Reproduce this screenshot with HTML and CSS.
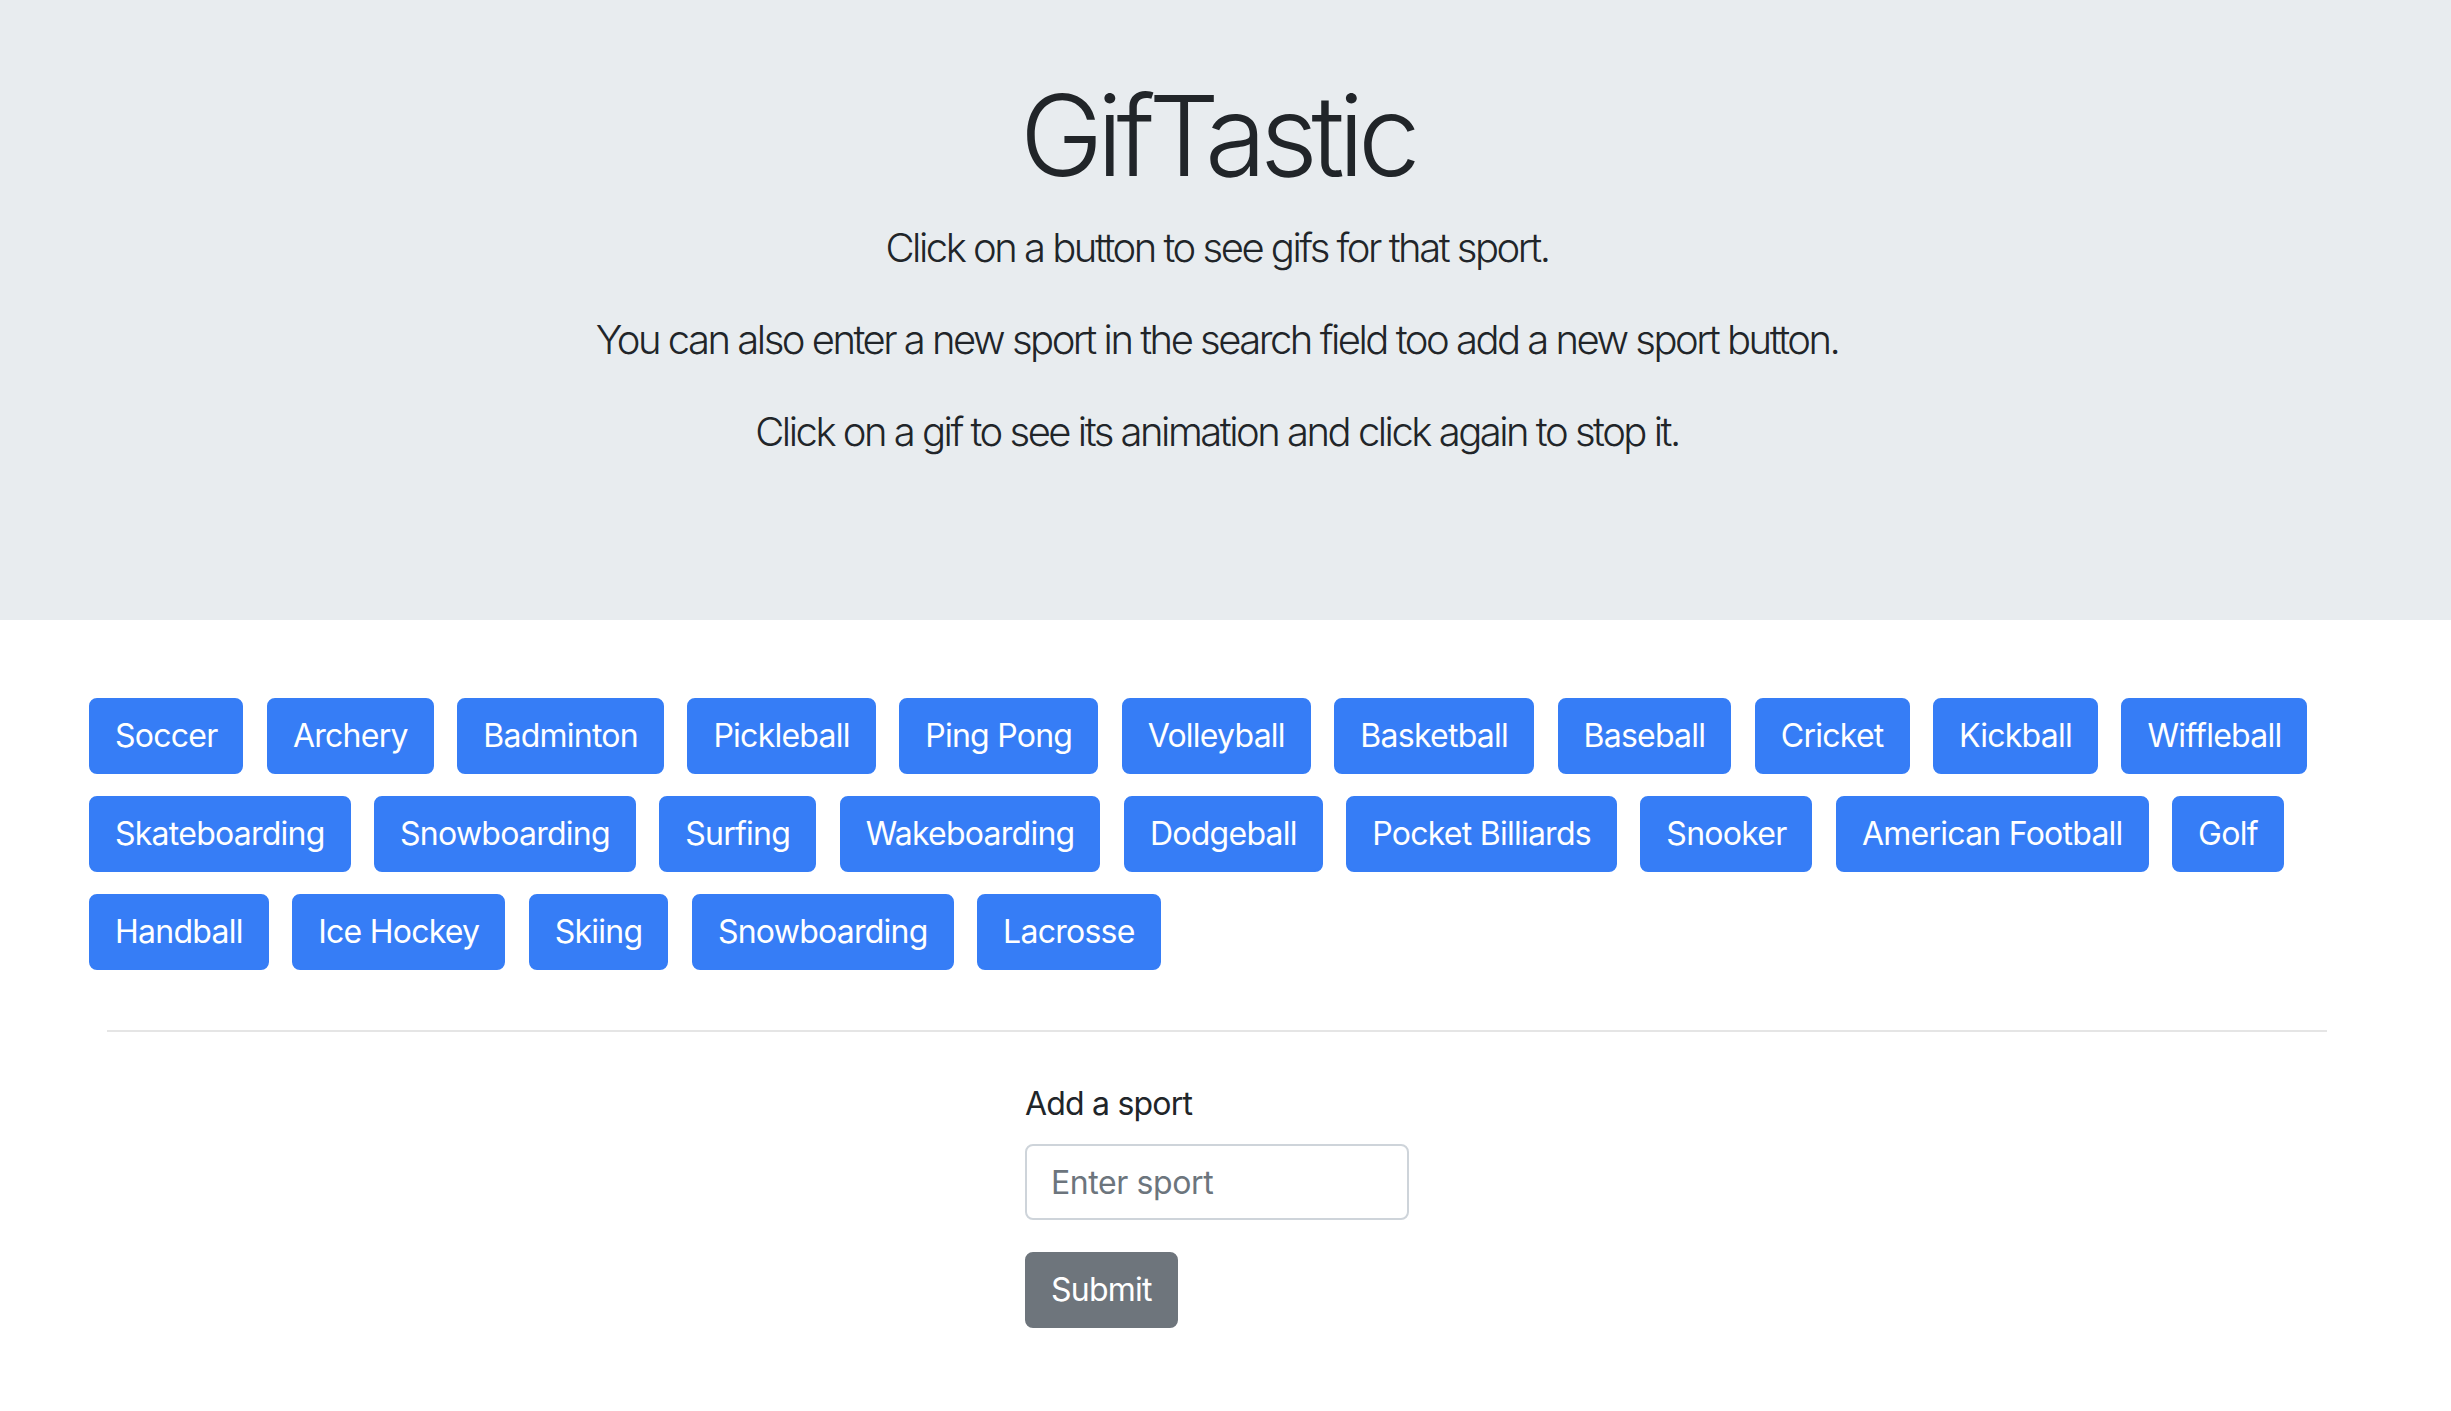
FILE: index.html
```html
<!DOCTYPE html>
<html lang="en">
<head>
<meta charset="utf-8">
<title>GifTastic</title>
<link rel="stylesheet" href="styles.css">
</head>
<body>
<header class="jumbotron">
  <h1 class="display">GifTastic</h1>
  <p class="lead">Click on a button to see gifs for that sport.</p>
  <p class="lead">You can also enter a new sport in the search field too add a new sport button.</p>
  <p class="lead">Click on a gif to see its animation and click again to stop it.</p>
</header>
<main>
  <div class="buttons">
    <button class="btn btn-primary">Soccer</button>
    <button class="btn btn-primary">Archery</button>
    <button class="btn btn-primary">Badminton</button>
    <button class="btn btn-primary">Pickleball</button>
    <button class="btn btn-primary">Ping Pong</button>
    <button class="btn btn-primary">Volleyball</button>
    <button class="btn btn-primary">Basketball</button>
    <button class="btn btn-primary">Baseball</button>
    <button class="btn btn-primary">Cricket</button>
    <button class="btn btn-primary">Kickball</button>
    <button class="btn btn-primary">Wiffleball</button>
    <button class="btn btn-primary">Skateboarding</button>
    <button class="btn btn-primary">Snowboarding</button>
    <button class="btn btn-primary">Surfing</button>
    <button class="btn btn-primary">Wakeboarding</button>
    <button class="btn btn-primary">Dodgeball</button>
    <button class="btn btn-primary">Pocket Billiards</button>
    <button class="btn btn-primary">Snooker</button>
    <button class="btn btn-primary">American Football</button>
    <button class="btn btn-primary">Golf</button>
    <button class="btn btn-primary">Handball</button>
    <button class="btn btn-primary">Ice Hockey</button>
    <button class="btn btn-primary">Skiing</button>
    <button class="btn btn-primary">Snowboarding</button>
    <button class="btn btn-primary">Lacrosse</button>
  </div>
  <div class="container">
    <hr class="divider">
    <form class="sport-form">
      <div class="form-group">
        <label class="form-label" for="sport-input">Add a sport</label>
        <input class="form-control" id="sport-input" type="text" placeholder="Enter sport">
      </div>
      <button type="submit" class="btn btn-secondary">Submit</button>
    </form>
  </div>
</main>
</body>
</html>
```
FILE: styles.css
```css
* {
  box-sizing: border-box;
}

html, body {
  margin: 0;
  padding: 0;
  background: #ffffff;
}

body {
  font-family: Inter, "Liberation Sans", sans-serif;
  color: #212529;
  font-size: 32px;
  line-height: 1.5;
}

.jumbotron {
  background: #e8ecef;
  padding: 68px 17px 126px 0;
  text-align: center;
}

.display {
  margin: 0 0 16px;
  font-size: 112px;
  font-weight: 300;
  line-height: 1.2;
  letter-spacing: -6.5px;
}

.lead {
  margin: 0 0 32px;
  font-size: 40px;
  font-weight: 300;
  line-height: 60px;
  letter-spacing: -2.5px;
}

.buttons {
  display: flex;
  flex-wrap: wrap;
  row-gap: 22px;
  column-gap: 23.5px;
  margin: 78px 0 0 89px;
  width: 2256px;
}

.btn {
  font-family: Inter, "Liberation Sans", sans-serif;
  font-size: 32px;
  line-height: 48px;
  font-weight: 400;
  padding: 12px 24px;
  border: 2px solid transparent;
  border-radius: 8px;
  color: #ffffff;
  cursor: pointer;
  letter-spacing: -0.75px;
}

.btn-primary {
  background: #367df6;
  border-color: #367df6;
}

.btn-secondary {
  background: #6e757c;
  border-color: #6e757c;
}

.container {
  width: 2220px;
  margin: 0 0 0 107px;
}

.divider {
  margin: 60px 0 0;
  border: 0;
  border-top: 2px solid #e5e5e5;
  height: 0;
}

.sport-form {
  width: 384px;
  margin: 48px auto 0;
}

.form-group {
  margin-bottom: 32px;
}

.form-label {
  display: block;
  margin-bottom: 16px;
  font-size: 32px;
  line-height: 48px;
  letter-spacing: -0.8px;
}

.form-control {
  display: block;
  width: 100%;
  height: 76px;
  padding: 12px 24px;
  font-family: Inter, "Liberation Sans", sans-serif;
  font-size: 32px;
  line-height: 48px;
  color: #495057;
  background: #ffffff;
  border: 2px solid #ced4da;
  border-radius: 8px;
  letter-spacing: -0.4px;
}

.form-control::placeholder {
  color: #6c757d;
  opacity: 1;
}
```
